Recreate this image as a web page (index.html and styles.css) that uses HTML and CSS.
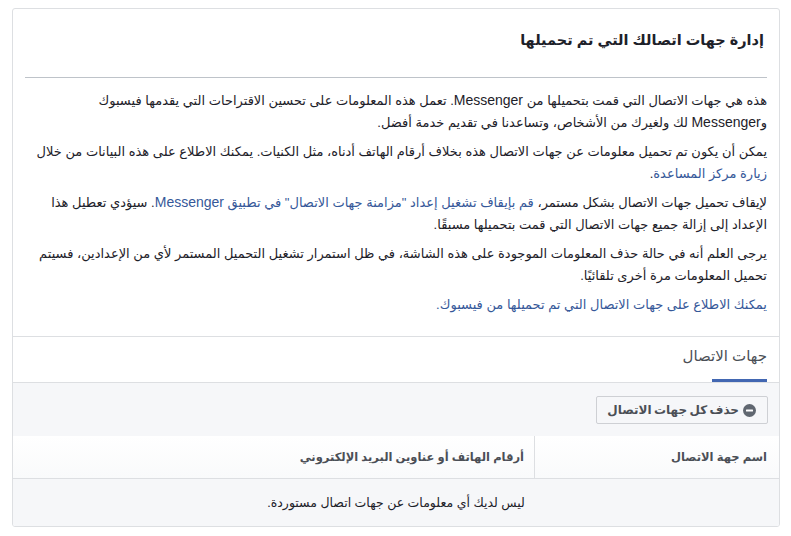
FILE: index.html
```html
<!DOCTYPE HTML>
<html lang="ar" dir="rtl">
<head>
<meta charset="utf-8">
<title>إدارة جهات اتصالك</title>
<link rel="stylesheet" href="styles.css">
</head>

<body>
	<div class="card">
		<div class="intro">
			<h1 class="title">إدارة جهات اتصالك التي تم تحميلها</h1>
			<div class="rule"></div>
			<p>هذه هي جهات الاتصال التي قمت بتحميلها من <span class="en">Messenger</span>. تعمل هذه المعلومات على تحسين الاقتراحات التي يقدمها فيسبوك و<span class="en">Messenger</span> لك ولغيرك من الأشخاص، وتساعدنا في تقديم خدمة أفضل.</p>
			<p>يمكن أن يكون تم تحميل معلومات عن جهات الاتصال هذه بخلاف أرقام الهاتف أدناه، مثل الكنيات. يمكنك الاطلاع على هذه البيانات من خلال <a href="javascript:;">زيارة مركز المساعدة</a>.</p>
			<p>لإيقاف تحميل جهات الاتصال بشكل مستمر، <a href="javascript:;">قم بإيقاف تشغيل إعداد "مزامنة جهات الاتصال" في تطبيق <span class="en">Messenger</span></a>. سيؤدي تعطيل هذا الإعداد إلى إزالة جميع جهات الاتصال التي قمت بتحميلها مسبقًا.</p>
			<p>يرجى العلم أنه في حالة حذف المعلومات الموجودة على هذه الشاشة، في ظل استمرار تشغيل التحميل المستمر لأي من الإعدادين، فسيتم تحميل المعلومات مرة أخرى تلقائيًا.</p>
			<p><a href="javascript:;">يمكنك الاطلاع على جهات الاتصال التي تم تحميلها من فيسبوك.</a></p>
		</div>

		<div class="tabs">
			<span class="tab">جهات الاتصال</span>
		</div>

		<div class="toolbar">
			<a class="btn" href="javascript:;">
				<svg class="btn-icon" width="13" height="13" viewBox="0 0 13 13"><circle cx="6.5" cy="6.5" r="6.5" fill="#606770"/><rect x="3" y="5.5" width="7" height="2" rx="0.5" fill="#fff"/></svg>
				حذف كل جهات الاتصال
			</a>
		</div>

		<div class="thead">
			<div class="th th-name">اسم جهة الاتصال</div>
			<div class="th th-info">أرقام الهاتف أو عناوين البريد الإلكتروني</div>
		</div>
		<div class="empty">ليس لديك أي معلومات عن جهات اتصال مستوردة.</div>
	</div>
</body>
</html>
```

FILE: styles.css
```css
*{padding:0;margin:0;box-sizing:border-box;}
body{background:#fff;font-family:"Liberation Sans","DejaVu Sans",sans-serif;color:#1d2129;}
a{color:#365899;text-decoration:none;}
.en{font-size:14px;line-height:14px;}

.card{margin:8px 11px 0 12px;border:1px solid #dddfe2;border-radius:3px;overflow:hidden;background:#fff;}

.intro{padding:21px 12px 20px;}
.title{font-size:14.5px;line-height:20px;font-weight:bold;padding:0 3px;color:#1d2129;}
.rule{border-top:1px solid #bec3c9;margin-top:27px;}
.intro p{font-size:13px;line-height:22px;margin-top:7px;}
.intro .rule + p{margin-top:12px;}

.tabs{border-top:1px solid #dddfe2;border-bottom:1px solid #dddfe2;padding:0 12px;display:flex;}
.tab{display:block;position:relative;font-size:15px;line-height:20px;color:#4b4f56;padding:9px 0 16px;}
.tab:after{content:"";position:absolute;right:0;bottom:0;width:55px;height:3px;background:#4267b2;}

.toolbar{background:#f6f7f9;padding:13px 11px 12px;display:flex;}
.btn{display:flex;align-items:center;gap:4px;height:28px;padding:0 11px 0 10px;background:#f6f7f9;border:1px solid #ced0d4;border-radius:2px;color:#4b4f56;font-size:12px;font-weight:bold;word-spacing:-1px;}

.thead{display:flex;background:linear-gradient(#fff,#f9fafb);border-bottom:1px solid #dddfe2;height:43px;}
.th{font-size:11.5px;font-weight:bold;color:#4b4f56;display:flex;align-items:center;}
.th-name{width:245px;padding:0 12px;border-left:1px solid #dddfe2;}
.th-info{flex:1;padding:0 10px;}

.empty{background:#f6f7f9;height:47px;display:flex;align-items:center;justify-content:center;font-size:12.5px;color:#1d2129;}
```
